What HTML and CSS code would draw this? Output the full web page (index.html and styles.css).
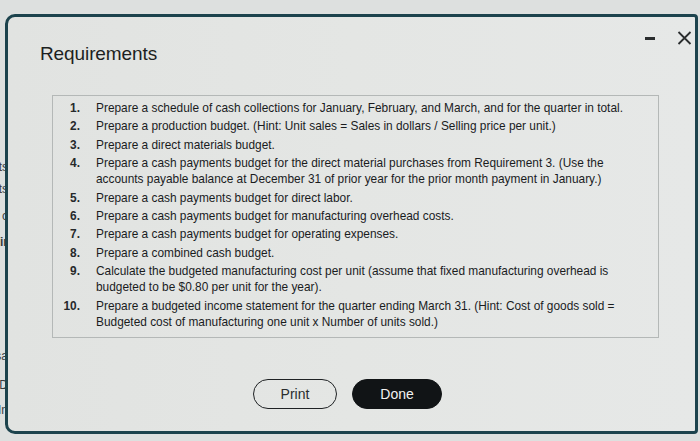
FILE: index.html
```html
<!DOCTYPE html>
<html>
<head>
<meta charset="utf-8">
<link rel="stylesheet" href="styles.css">
</head>
<body>
<div class="page">
  <div class="bg-col">
    <div class="bg-line l1"><span>Costs</span></div>
    <div class="bg-line l2"><span>Units</span></div>
    <div class="bg-line l3"><span>Cost c</span></div>
    <div class="bg-line l4 bold"><span>Fir</span></div>
    <div class="bg-line l5"><span>Sales sa</span></div>
    <div class="bg-line l6"><span>Cost: D</span></div>
    <div class="bg-line l7"><span>Fixed In</span></div>
  </div>
  <div class="dialog">
    <div class="head">
      <h1 class="title">Requirements</h1>
      <div class="controls">
        <span class="minus"></span>
        <svg class="close" width="15" height="14" viewBox="0 0 15 14"><path d="M1.5 1 L13.5 13 M13.5 1 L1.5 13" stroke="#2a2d2e" stroke-width="1.8" fill="none"/></svg>
      </div>
    </div>
    <ol class="reqs">
      <li><span class="num">1.</span><span class="txt">Prepare a schedule of cash collections for January, February, and March, and for the quarter in total.</span></li>
      <li><span class="num">2.</span><span class="txt">Prepare a production budget. (Hint: Unit sales = Sales in dollars / Selling price per unit.)</span></li>
      <li><span class="num">3.</span><span class="txt">Prepare a direct materials budget.</span></li>
      <li><span class="num">4.</span><span class="txt">Prepare a cash payments budget for the direct material purchases from Requirement 3. (Use the accounts payable balance at December 31 of prior year for the prior month payment in January.)</span></li>
      <li><span class="num">5.</span><span class="txt">Prepare a cash payments budget for direct labor.</span></li>
      <li><span class="num">6.</span><span class="txt">Prepare a cash payments budget for manufacturing overhead costs.</span></li>
      <li><span class="num">7.</span><span class="txt">Prepare a cash payments budget for operating expenses.</span></li>
      <li><span class="num">8.</span><span class="txt">Prepare a combined cash budget.</span></li>
      <li><span class="num">9.</span><span class="txt">Calculate the budgeted manufacturing cost per unit (assume that fixed manufacturing overhead is budgeted to be $0.80 per unit for the year).</span></li>
      <li><span class="num">10.</span><span class="txt">Prepare a budgeted income statement for the quarter ending March 31. (Hint: Cost of goods sold = Budgeted cost of manufacturing one unit x Number of units sold.)</span></li>
    </ol>
    <div class="actions">
      <button class="btn print">Print</button>
      <button class="btn done">Done</button>
    </div>
  </div>
</div>
</body>
</html>
```

FILE: styles.css
```css
* { box-sizing: border-box; }
html, body { margin: 0; padding: 0; }
body {
  width: 700px;
  height: 441px;
  overflow: hidden;
  background: #dde0df;
  font-family: "Liberation Sans", Arial, sans-serif;
  color: #222;
}
.page {
  position: relative;
  width: 700px;
  height: 441px;
}
.bg-col {
  width: 8px;
  padding-top: 160px;
  display: flex;
  flex-direction: column;
  font-size: 12px;
  color: #3a3d40;
}
.bg-line {
  display: flex;
  justify-content: flex-end;
  white-space: nowrap;
  height: 14px;
}
.l2 { margin-top: 8px; }
.l3 { margin-top: 13px; }
.l4 { margin-top: 12px; }
.l5 { margin-top: 100px; }
.l6 { margin-top: 15px; }
.l7 { margin-top: 11px; }
.bold { font-weight: bold; }

.dialog {
  position: absolute;
  left: 5px;
  top: 14px;
  width: 693px;
  height: 420px;
  background: linear-gradient(90deg, #e1e3e1 0%, #e4e6e4 50%, #e6e8e7 100%);
  border: 3px solid #1c434d;
  border-radius: 10px 4px 4px 10px;
  display: flex;
  flex-direction: column;
}
.head {
  display: flex;
  justify-content: space-between;
  align-items: flex-start;
  padding: 0 3px 0 32px;
  height: 78px;
}
.title {
  margin: 26px 0 0 0;
  font-size: 19px;
  font-weight: normal;
  color: #1c1f21;
  letter-spacing: -0.1px;
}
.controls {
  display: flex;
  align-items: center;
  gap: 22px;
  margin-top: 14px;
}
.minus {
  display: block;
  width: 10px;
  height: 3px;
  background: #2a2d2e;
}
.close { display: block; }

.reqs {
  list-style: none;
  margin: 0 0 0 44px;
  width: 607px;
  padding: 4px 10px 7px 0;
  border: 1px solid #b4b8b7;
  display: flex;
  flex-direction: column;
  gap: 2.4px;
  font-size: 11.88px;
  line-height: 16px;
}
.reqs li {
  display: flex;
}
.num {
  width: 27px;
  flex: none;
  text-align: right;
  font-weight: bold;
  color: #26292b;
}
.txt {
  margin-left: 16px;
  color: #1a1c1e;
}

.actions {
  display: flex;
  justify-content: center;
  gap: 15px;
  margin-top: 41px;
  padding-right: 8px;
}
.btn {
  font-family: "Liberation Sans", Arial, sans-serif;
  font-size: 14px;
  height: 30px;
  border-radius: 15px;
  cursor: pointer;
}
.print {
  width: 84px;
  background: transparent;
  border: 1.5px solid #1f2224;
  color: #2a2d2e;
}
.done {
  width: 90px;
  background: #111416;
  border: 1.5px solid #111416;
  color: #f2f2f2;
}
```
